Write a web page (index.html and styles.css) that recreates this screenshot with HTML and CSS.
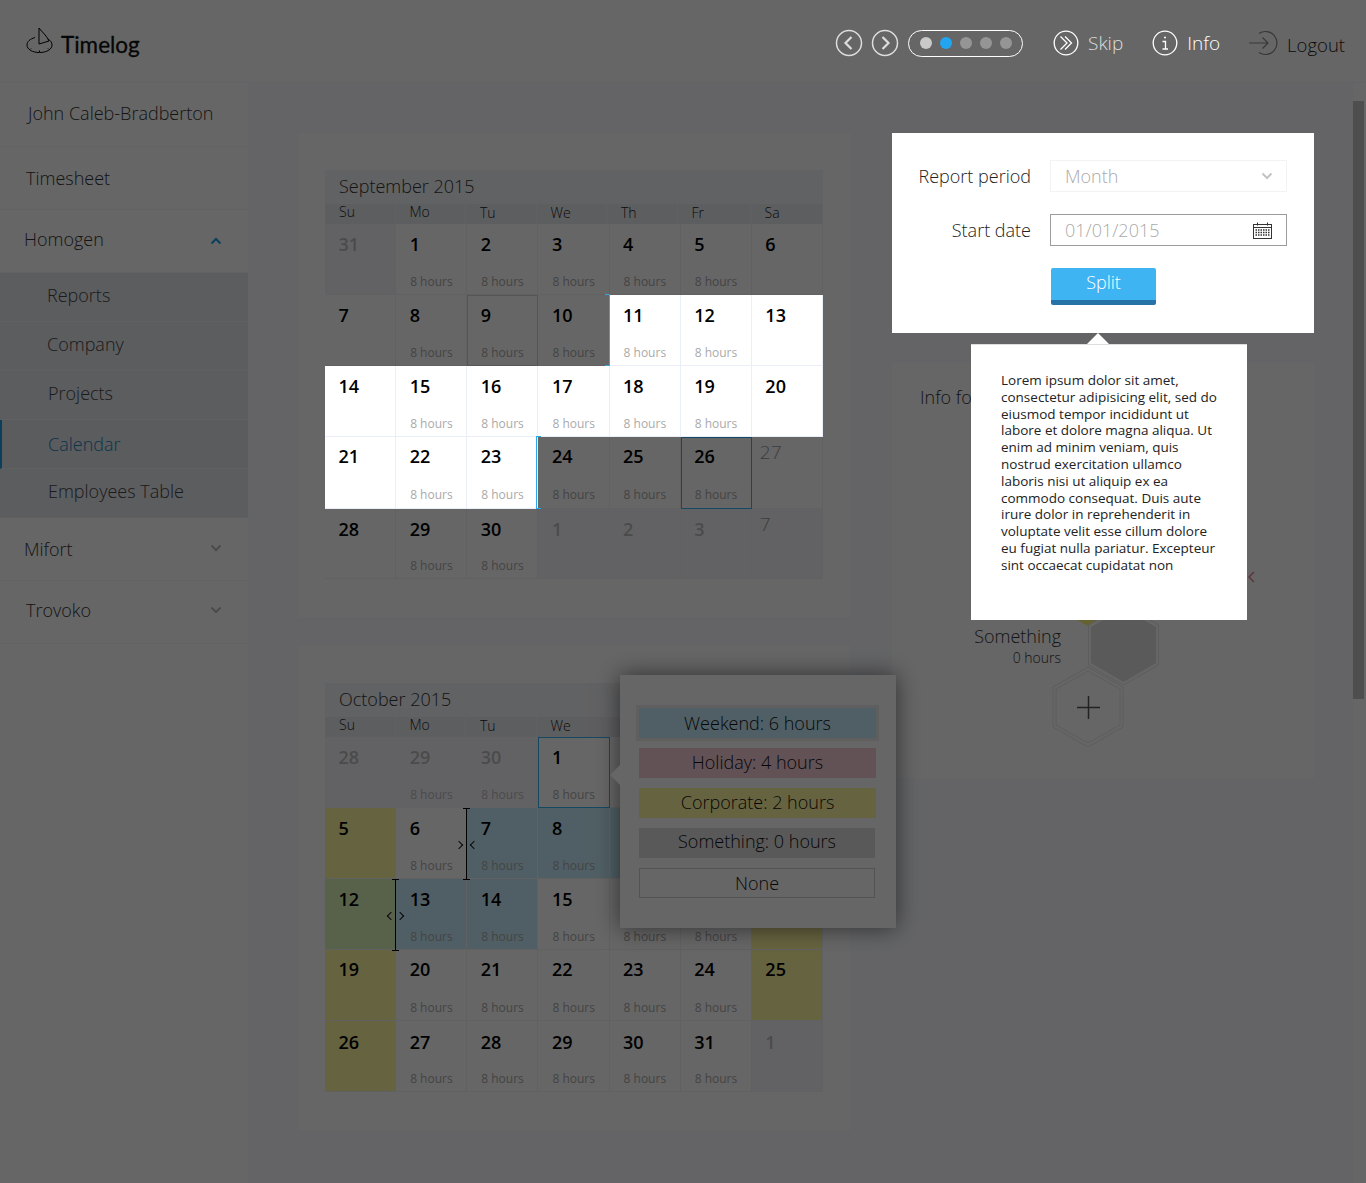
FILE: index.html
```html
<!DOCTYPE html>
<html lang="en">
<head>
    <meta charset="UTF-8">
    <title>Timelog</title>
    <link rel="stylesheet" href="styles.css">
</head>
<body>
    <header class="topbar">
        <div class="logo">
            <svg class="logo-icon" width="27" height="27" viewBox="0 0 27 27" fill="none" stroke="#000" stroke-width="1">
                <path d="M9 10.5 C4 12 1 14.5 1 18 C1 22.5 6.5 25.5 13.5 25.5 C20.5 25.5 26 22.5 26 18 C26 15.5 24.5 13.5 22 12"/>
                <path d="M13 1 L13 17 L23 14 C21 9 16 5 13 1 Z" fill="#fff"/>
                <path d="M13.5 23.5 V25 M5 21.5 L4 22.5 M22 21.5 L23 22.5"/>
            </svg>
            <span>Timelog</span>
        </div>
        <nav class="tour">
            <svg class="round-btn" width="28" height="28" viewBox="0 0 28 28" fill="none" stroke="#ddd"><circle cx="14" cy="14" r="12.5" stroke-width="1.5"/><path d="M16.5 8 L10.5 14 L16.5 20" stroke-width="2.2"/></svg>
            <svg class="round-btn" width="28" height="28" viewBox="0 0 28 28" fill="none" stroke="#ddd"><circle cx="14" cy="14" r="12.5" stroke-width="1.5"/><path d="M11.5 8 L17.5 14 L11.5 20" stroke-width="2.2"/></svg>
            <div class="steps">
                <i class="dot dot-done"></i><i class="dot dot-now"></i><i class="dot"></i><i class="dot"></i><i class="dot"></i>
            </div>
            <a class="tour-link tour-skip">
                <svg width="26" height="26" viewBox="0 0 26 26" fill="none" stroke="#fff"><circle cx="13" cy="13" r="11.8" stroke-width="1.3"/><path d="M7.5 6.5 L14 13 L7.5 19.5 M12 6.5 L18.5 13 L12 19.5" stroke-width="1.3"/></svg>
                Skip
            </a>
            <a class="tour-link tour-info">
                <svg width="26" height="26" viewBox="0 0 26 26" fill="none" stroke="#fff"><circle cx="13" cy="13" r="11.8" stroke-width="1.3"/><path d="M10.5 11.5 H13.5 V19 M10.5 19 H16" stroke-width="1.3"/><circle cx="13" cy="7.5" r="1" fill="#fff" stroke="none"/></svg>
                Info
            </a>
            <a class="tour-link tour-logout">
                <svg width="34" height="26" viewBox="0 0 34 26" fill="none" stroke="#8c8c8c" stroke-width="1.2"><path d="M11 3.5 A11.5 11.5 0 1 1 11 22.5"/><path d="M1 13 H20 M14.5 7.5 L20 13 L14.5 18.5"/></svg>
                <span>Logout</span>
            </a>
        </nav>
    </header>

    <div class="layout">
        <aside class="sidebar">
            <div class="side-item side-user">John Caleb-Bradberton</div>
            <div class="side-item side-sheet">Timesheet</div>
            <div class="side-item side-group">Homogen <svg class="chev chev-open" width="12" height="8" viewBox="0 0 12 8" fill="none" stroke="#1f9fe6" stroke-width="2"><path d="M1.5 6.5 L6 2 L10.5 6.5"/></svg></div>
            <div class="sub-item">Reports</div>
            <div class="sub-item">Company</div>
            <div class="sub-item sub-projects">Projects</div>
            <div class="sub-item sub-active">Calendar</div>
            <div class="sub-item sub-projects">Employees Table</div>
            <div class="side-item side-group side-mifort">Mifort <svg class="chev" width="12" height="8" viewBox="0 0 12 8" fill="none" stroke="#bbb" stroke-width="2"><path d="M1.5 1.5 L6 6 L10.5 1.5"/></svg></div>
            <div class="side-item side-group side-trovoko">Trovoko <svg class="chev" width="12" height="8" viewBox="0 0 12 8" fill="none" stroke="#bbb" stroke-width="2"><path d="M1.5 1.5 L6 6 L10.5 1.5"/></svg></div>
        </aside>

        <main class="content">
            <div class="col-left">
                <section class="card cal-card">
                    <div class="cal-title">September 2015</div>
                    <div class="cal-head"><span>Su</span><span>Mo</span><span>Tu</span><span>We</span><span>Th</span><span>Fr</span><span>Sa</span></div>
                    <div class="cal-grid cal-sep">
                        <div class="day other"><b>31</b></div>
                        <div class="day"><b>1</b><small>8 hours</small></div>
                        <div class="day"><b>2</b><small>8 hours</small></div>
                        <div class="day"><b>3</b><small>8 hours</small></div>
                        <div class="day"><b>4</b><small>8 hours</small></div>
                        <div class="day"><b>5</b><small>8 hours</small></div>
                        <div class="day"><b>6</b></div>

                        <div class="day"><b>7</b></div>
                        <div class="day"><b>8</b><small>8 hours</small></div>
                        <div class="day boxed"><b>9</b><small>8 hours</small></div>
                        <div class="day edge"><b>10</b><small>8 hours</small></div>
                        <div class="day lit"><b>11</b><small>8 hours</small></div>
                        <div class="day lit"><b>12</b><small>8 hours</small></div>
                        <div class="day lit"><b>13</b></div>

                        <div class="day lit"><b>14</b></div>
                        <div class="day lit"><b>15</b><small>8 hours</small></div>
                        <div class="day lit"><b>16</b><small>8 hours</small></div>
                        <div class="day lit"><b>17</b><small>8 hours</small></div>
                        <div class="day lit"><b>18</b><small>8 hours</small></div>
                        <div class="day lit"><b>19</b><small>8 hours</small></div>
                        <div class="day lit"><b>20</b></div>

                        <div class="day lit"><b>21</b></div>
                        <div class="day lit"><b>22</b><small>8 hours</small></div>
                        <div class="day lit edge-lit"><b>23</b><small>8 hours</small></div>
                        <div class="day"><b>24</b><small>8 hours</small></div>
                        <div class="day"><b>25</b><small>8 hours</small></div>
                        <div class="day boxed-blue"><b>26</b><small>8 hours</small></div>
                        <div class="day thin"><b>27</b></div>

                        <div class="day"><b>28</b></div>
                        <div class="day"><b>29</b><small>8 hours</small></div>
                        <div class="day"><b>30</b><small>8 hours</small></div>
                        <div class="day other"><b>1</b></div>
                        <div class="day other"><b>2</b></div>
                        <div class="day other"><b>3</b></div>
                        <div class="day other thin"><b>7</b></div>
                    </div>
                </section>

                <section class="card cal-card">
                    <div class="cal-title">October 2015</div>
                    <div class="cal-head"><span>Su</span><span>Mo</span><span>Tu</span><span>We</span><span></span><span></span><span></span></div>
                    <div class="cal-grid cal-oct">
                        <div class="day other"><b>28</b></div>
                        <div class="day other"><b>29</b><small>8 hours</small></div>
                        <div class="day other"><b>30</b><small>8 hours</small></div>
                        <div class="day boxed-blue"><b>1</b><small>8 hours</small></div>
                        <div class="day"></div>
                        <div class="day"></div>
                        <div class="day corp"></div>

                        <div class="day corp"><b>5</b></div>
                        <div class="day"><b>6</b><small>8 hours</small><i class="handle handle-in"></i></div>
                        <div class="day wknd"><b>7</b><small>8 hours</small></div>
                        <div class="day wknd"><b>8</b><small>8 hours</small></div>
                        <div class="day wknd"></div>
                        <div class="day"></div>
                        <div class="day corp"></div>

                        <div class="day green"><b>12</b><i class="handle handle-out"></i></div>
                        <div class="day wknd"><b>13</b><small>8 hours</small></div>
                        <div class="day wknd"><b>14</b><small>8 hours</small></div>
                        <div class="day"><b>15</b><small>8 hours</small></div>
                        <div class="day"><small>8 hours</small></div>
                        <div class="day"><small>8 hours</small></div>
                        <div class="day corp"></div>

                        <div class="day corp"><b>19</b></div>
                        <div class="day"><b>20</b><small>8 hours</small></div>
                        <div class="day"><b>21</b><small>8 hours</small></div>
                        <div class="day"><b>22</b><small>8 hours</small></div>
                        <div class="day"><b>23</b><small>8 hours</small></div>
                        <div class="day"><b>24</b><small>8 hours</small></div>
                        <div class="day corp"><b>25</b></div>

                        <div class="day corp"><b>26</b></div>
                        <div class="day"><b>27</b><small>8 hours</small></div>
                        <div class="day"><b>28</b><small>8 hours</small></div>
                        <div class="day"><b>29</b><small>8 hours</small></div>
                        <div class="day"><b>30</b><small>8 hours</small></div>
                        <div class="day"><b>31</b><small>8 hours</small></div>
                        <div class="day other"><b>1</b></div>
                    </div>

                    <div class="legend-pop">
                        <div class="legend legend-wknd">Weekend: 6 hours</div>
                        <div class="legend legend-hol">Holiday: 4 hours</div>
                        <div class="legend legend-corp">Corporate: 2 hours</div>
                        <div class="legend legend-some">Something: 0 hours</div>
                        <div class="legend legend-none">None</div>
                    </div>
                </section>
            </div>

            <div class="col-right">
                <section class="report-card">
                    <div class="form-row">
                        <label class="form-label">Report period</label>
                        <div class="field field-select">Month
                            <svg width="12" height="8" viewBox="0 0 12 8" fill="none" stroke="#c4c4c4" stroke-width="2"><path d="M1.5 1.5 L6 6 L10.5 1.5"/></svg>
                        </div>
                    </div>
                    <div class="form-row">
                        <label class="form-label">Start date</label>
                        <div class="field field-date">01/01/2015
                            <svg width="20" height="17" viewBox="0 0 20 17" fill="none" stroke="#333">
                                <rect x="0.5" y="2.5" width="18" height="14"/>
                                <path d="M0.5 5.5 H18.5 M4.5 0.5 V3.5 M14.5 0.5 V3.5"/>
                                <path d="M2.5 8 H16.5 M2.5 10.5 H16.5 M2.5 13 H16.5" stroke-width="1.3" stroke-dasharray="1.5 1"/>
                            </svg>
                        </div>
                    </div>
                    <button class="btn-split">Split</button>
                </section>

                <div class="tip">
                    Lorem ipsum dolor sit amet, consectetur adipisicing elit, sed do eiusmod tempor incididunt ut labore et dolore magna aliqua. Ut enim ad minim veniam, quis nostrud exercitation ullamco laboris nisi ut aliquip ex ea commodo consequat. Duis aute irure dolor in reprehenderit in voluptate velit esse cillum dolore eu fugiat nulla pariatur. Excepteur sint occaecat cupidatat non
                </div>

                <section class="card info-card">
                    <div class="info-title">Info fo</div>
                    <svg class="hex-map" width="270" height="190" viewBox="0 0 270 190" fill="none">
                        <path d="M263 2 L258 7 L263 12" stroke="#f08090" stroke-width="1.5"/>
                        <path d="M65 38 L96.5 56 L128 38 Z" fill="#fff27a"/>
                        <path d="M132.5 35 L167.5 55 L167.5 95 L132.5 115 L97.5 95 L97.5 55 Z" stroke="#e8e8e8"/>
                        <path d="M132.5 38 L165 57 L165 93 L132.5 112 L100 93 L100 57 Z" fill="#e0e0e0"/>
                        <path d="M97 97 L132 117 L132 157 L97 177 L62 157 L62 117 Z" stroke="#e8e8e8"/>
                        <path d="M97 101 L129 119 L129 155 L97 173 L65 155 L65 119 Z" stroke="#e8e8e8"/>
                        <path d="M97.5 126 V149 M86 137.5 H109" stroke="#555" stroke-width="1.5"/>
                    </svg>
                    <div class="hex-label">
                        <div class="hex-name">Something</div>
                        <div class="hex-hours">0 hours</div>
                    </div>
                </section>
            </div>
        </main>
        <div class="scroll-track"><div class="scroll-thumb"></div></div>
    </div>

    <div class="dim"></div>
</body>
</html>
```

FILE: styles.css
```css
* {
    box-sizing: border-box;
}
body {
    margin: 0;
    height: 1183px;
    overflow: hidden;
    position: relative;
    font-family: "Open Sans", sans-serif;
    font-weight: 300;
    color: #333;
    background: #fff;
}
.dim {
    position: absolute;
    top: 0;
    left: 0;
    right: 0;
    bottom: 0;
    z-index: 10;
    background: rgba(0, 0, 0, 0.6);
}

/* top bar */
.topbar {
    height: 83px;
    padding-top: 4px;
    display: flex;
    align-items: center;
    justify-content: space-between;
    border-bottom: 1px solid #f7f7f7;
}
.logo {
    display: flex;
    align-items: center;
    margin-left: 26px;
    font-family: Lato, sans-serif;
    font-size: 22.5px;
    font-weight: 400;
    color: #111;
    -webkit-text-stroke: 0.3px #111;
}
.logo span {
    margin-top: 2px;
}
.logo-icon {
    margin: -6px 8px 0 0;
}
.tour {
    display: flex;
    align-items: center;
    margin-right: 21px;
    font-size: 19px;
}
.round-btn {
    position: relative;
    z-index: 20;
    margin-right: 8px;
}
.steps {
    position: relative;
    z-index: 20;
    width: 115px;
    height: 27px;
    margin-left: 1px;
    display: flex;
    align-items: center;
    gap: 8px;
    padding-left: 10.5px;
    border: 1.5px solid #fff;
    border-radius: 14px;
}
.dot {
    width: 12px;
    height: 12px;
    border-radius: 50%;
    background: #959595;
}
.dot-done {
    background: #c9c9c9;
}
.dot-now {
    background: #22a5f0;
}
.tour-link {
    position: relative;
    display: flex;
    align-items: center;
    gap: 9px;
}
.tour-skip {
    z-index: 20;
    margin-left: 30px;
    color: #ddd;
}
.tour-info {
    z-index: 20;
    margin-left: 29px;
    color: #fff;
}
.tour-logout {
    margin-left: 28px;
    color: #222;
    gap: 5px;
    font-size: 18.5px;
}
.tour-logout span {
    margin-top: 2px;
}

/* sidebar */
.layout {
    display: flex;
    height: 1100px;
}
.sidebar {
    width: 248px;
    flex-shrink: 0;
    font-size: 18px;
    color: #333;
}
.side-item {
    height: 63px;
    display: flex;
    align-items: center;
    padding-left: 26px;
    border-bottom: 1px solid #f5f5f5;
}
.side-user {
    height: 64px;
    padding: 0 0 4px 28px;
}
.side-sheet {
    padding-bottom: 0;
}
.side-group {
    justify-content: space-between;
    padding: 0 26px 4px 24px;
}
.side-mifort {
    padding-bottom: 0;
}
.side-mifort .chev {
    margin-top: -2px;
}
.side-trovoko {
    padding-left: 26px;
    padding-bottom: 5px;
}
.side-trovoko .chev {
    margin-top: 1px;
}
.chev {
    margin-top: 3px;
}
.sub-item {
    height: 49px;
    display: flex;
    align-items: center;
    padding: 0 0 5px 47px;
    background: #e6e8ee;
    border-bottom: 1px solid #f1f1f3;
    color: #444;
}
.sub-projects {
    padding-left: 48px;
}
.sub-active {
    padding: 0 0 0 46px;
    color: #1c81bd;
    border-left: 2px solid #1e9fe6;
    background: #e3e5e9;
}

/* content */
.content {
    flex: 1;
    display: flex;
    gap: 42px;
    padding: 50px 39px 0 50px;
    background: #fafbff;
}
.col-left {
    width: 552px;
    flex-shrink: 0;
    display: flex;
    flex-direction: column;
    gap: 29px;
}
.col-right {
    position: relative;
    width: 422px;
    flex-shrink: 0;
    display: flex;
    flex-direction: column;
    gap: 30px;
}
.card {
    position: relative;
    background: #fff;
}
.cal-card {
    height: 484px;
    padding: 37px 27px 0;
}
.cal-title {
    height: 34px;
    padding: 4px 0 0 14px;
    font-size: 18px;
    background: #f3f4f7;
}
.cal-head {
    height: 20px;
    display: grid;
    grid-template-columns: repeat(5, 70.5px) 73px auto;
    font-size: 14px;
    font-weight: 300;
    background: #e9eaee;
    color: #222;
}
.cal-head span {
    padding-left: 14px;
    line-height: 17px;
    border-right: 1px solid #f1f2f5;
}
.cal-head span:nth-child(-n+2) {
    line-height: 15px;
}

/* days */
.cal-grid {
    display: grid;
    width: 498px;
    grid-template-columns: repeat(7, 1fr);
    grid-auto-rows: 71px;
}
.cal-sep {
    grid-template-rows: 71px 71px 71px 72px 70px;
}
.day {
    position: relative;
    padding: 8px 0 0 13.5px;
    border-right: 1px solid #f2f2f4;
    border-bottom: 1px solid #f2f2f4;
    background: #fff;
}
.day b {
    display: block;
    font-size: 18px;
    font-weight: 600;
    line-height: 24px;
    color: #000;
}
.day small {
    position: absolute;
    left: 14px;
    bottom: 4px;
    font-size: 12px;
    font-weight: 400;
    line-height: 16px;
    color: #aaa;
}
.cal-sep .day:nth-child(n+22):nth-child(-n+28) b,
.cal-oct .day:nth-child(n+22):nth-child(-n+28) b {
    margin-top: -1px;
}
.cal-sep .day:nth-child(n+22):nth-child(-n+28) small {
    bottom: 5px;
}
.cal-sep .day.boxed-blue:nth-child(26):nth-child(26) b {
    margin-top: 0;
}
.cal-oct .day:nth-child(n+29) b {
    margin-top: 1px;
}
.day.other {
    background: #f5f6fa;
}
.day.other b,
.day.other small {
    color: #bbb;
}
.day.thin {
    padding-left: 8px;
}
.cal-sep .day.thin b {
    margin-top: -5px;
    font-weight: 300;
    font-size: 19px;
    color: #999;
}
.cal-sep .day.thin:nth-child(28):nth-child(28):nth-child(28) b {
    margin-top: -5px;
}
.day.lit {
    z-index: 20;
    border-right-color: #eaeef8;
    border-bottom-color: #eaeef8;
}
.day.boxed {
    border: 1px solid #d4d4d4;
    padding: 7px 0 0 12.5px;
}
.day.boxed-blue {
    border: 1px solid #35b5f5;
    padding: 7px 0 0 12.5px;
}
.day.boxed small,
.day.boxed-blue small {
    left: 13px;
}
.day.edge::after,
.day.edge-lit::after {
    content: "";
    position: absolute;
    top: -1px;
    bottom: -1px;
    width: 4px;
    z-index: 21;
    border-top: 1px solid #29a8f0;
    border-bottom: 1px solid #29a8f0;
}
.day.edge::after {
    right: -1px;
    border-right: 1px solid #29a8f0;
}
.day.edge-lit::after {
    right: -4px;
    border-left: 1px solid #29a8f0;
}
.day.corp {
    background: #fff8a0;
}
.day.wknd {
    background: #c8eefc;
}
.day.green {
    background: #dcf2b8;
}

/* drag handles between days */
.handle {
    position: absolute;
    top: 0;
    right: -4px;
    width: 7px;
    height: 72px;
    z-index: 2;
    border-top: 1px solid #000;
    border-bottom: 1px solid #000;
    background: linear-gradient(#000, #000) center / 1px 100% no-repeat;
}
.handle::before,
.handle::after {
    content: "";
    position: absolute;
    top: 33px;
    width: 5px;
    height: 5px;
    transform: rotate(45deg);
}
.handle::before {
    left: -4px;
}
.handle::after {
    right: -4px;
}
.handle-in::before {
    left: -7px;
}
.handle-in::after {
    right: -7px;
}
.handle-in::before,
.handle-out::after {
    border-top: 1px solid #111;
    border-right: 1px solid #111;
}
.handle-in::after,
.handle-out::before {
    border-bottom: 1px solid #111;
    border-left: 1px solid #111;
}

/* hours picker */
.legend-pop {
    position: absolute;
    left: 322px;
    top: 29px;
    width: 276px;
    height: 253px;
    padding: 33px 20px 0 19px;
    background: #fff;
    box-shadow: 0 0 22px rgba(0, 0, 0, 0.55);
    display: flex;
    flex-direction: column;
    gap: 10px;
    z-index: 3;
}
.legend-pop::before {
    content: "";
    position: absolute;
    left: -10px;
    top: 90px;
    border-style: solid;
    border-width: 10px 10px 10px 0;
    border-color: transparent #fff transparent transparent;
}
.legend {
    height: 30px;
    flex-shrink: 0;
    text-align: center;
    font-size: 18px;
    line-height: 29px;
    color: #111;
    width: 237px;
}
.legend-wknd {
    background: #c8eefc;
    outline: 3px solid #eee;
    line-height: 31px;
}
.legend-hol {
    background: #f5ccd8;
}
.legend-corp {
    background: #fff8a0;
    line-height: 28px;
}
.legend-some {
    background: #dedede;
    width: 236px;
    line-height: 27px;
}
.legend-none {
    border: 1px solid #d0d0d0;
    width: 236px;
}

/* report form */
.report-card {
    position: relative;
    z-index: 20;
    height: 200px;
    padding: 27px 27px 0 0;
    background: #fff;
    color: #222;
    font-size: 18px;
}
.form-row {
    display: flex;
    align-items: center;
    height: 32px;
    margin-bottom: 22px;
}
.form-label {
    width: 139px;
    text-align: right;
    margin-right: 19px;
}
.field {
    width: 237px;
    height: 32px;
    display: flex;
    align-items: center;
    justify-content: space-between;
    padding: 0 13px 0 14px;
    color: #aaa;
}
.field-select {
    border: 1px solid #f3f3f3;
}
.field-date {
    border: 1px solid #9c9c9c;
}
.btn-split {
    display: block;
    width: 105px;
    height: 37px;
    margin: 0 0 0 159px;
    padding: 0 0 5px;
    border: none;
    border-bottom: 5px solid #2673a8;
    border-radius: 2px;
    background: #3fb4f3;
    color: #fff;
    font-family: inherit;
    font-size: 18px;
    font-weight: 300;
}

/* tooltip */
.tip {
    position: absolute;
    left: 79px;
    top: 211px;
    width: 276px;
    height: 276px;
    z-index: 20;
    padding: 27px 30px 0;
    background: #fff;
    border-top: 1px solid #ddd;
    font-size: 13.5px;
    font-weight: 400;
    line-height: 16.8px;
    color: #222;
}
.tip::before {
    content: "";
    position: absolute;
    left: 116px;
    top: -12px;
    border-style: solid;
    border-width: 0 11px 11px;
    border-color: transparent transparent #fff;
}

/* info card */
.info-card {
    height: 415px;
}
.info-title {
    position: absolute;
    left: 28px;
    top: 22px;
    font-size: 18px;
}
.hex-map {
    position: absolute;
    left: 99px;
    top: 207px;
}
.hex-label {
    position: absolute;
    right: 253px;
    top: 260px;
    text-align: right;
}
.hex-name {
    font-size: 18px;
    line-height: 26px;
}
.hex-hours {
    font-size: 14px;
    font-weight: 300;
    line-height: 18px;
}

/* scrollbar */
.scroll-track {
    width: 13px;
    flex-shrink: 0;
    position: absolute;
    top: 83px;
    right: 0;
    bottom: 0;
    padding: 18px 2px 0 0;
    background: #fff;
}
.scroll-thumb {
    height: 598px;
    background: #c4c4c4;
}
```
